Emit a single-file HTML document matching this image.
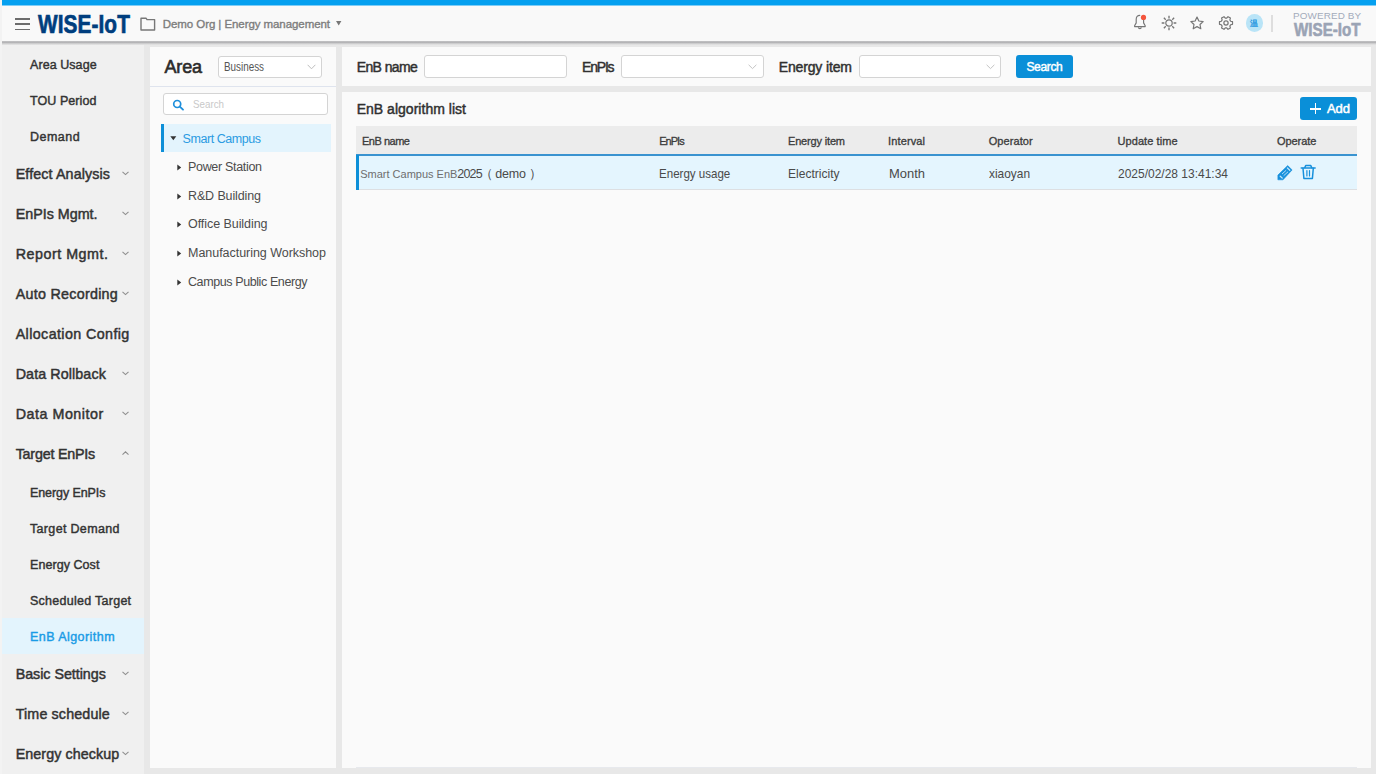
<!DOCTYPE html>
<html lang="en"><head><meta charset="utf-8"><title>WISE-IoT Energy management - EnB Algorithm</title>
<style>
html,body{margin:0;padding:0}
body{width:1376px;height:774px;overflow:hidden;position:relative;background:#e8e8e8;font-family:"Liberation Sans", sans-serif;}
div,span,svg{position:absolute;box-sizing:border-box}
header,nav,aside,main,section{display:block;margin:0;padding:0}
.t{white-space:nowrap;line-height:20px;display:block}

.inp{background:#fff;border:1px solid #d4d4d4;border-radius:3px}

</style></head><body>
<header>
<div style="left:0px;top:0px;width:1376px;height:5px;background:#05a0f0"></div>
<div style="left:0px;top:5px;width:1376px;height:1px;background:#7fcdf6"></div>
<div style="left:0px;top:6px;width:1376px;height:35px;background:#f9f9f9"></div>
<div style="left:0px;top:41px;width:1376px;height:4px;background:linear-gradient(#c4c4c6 0%,#b2b2b4 35%,#cfcfd0 65%,#e8e8e8 100%)"></div>
<div style="left:15px;top:18.2px;width:15px;height:1.5px;background:#6c6c6c"></div>
<div style="left:15px;top:23.4px;width:15px;height:1.5px;background:#6c6c6c"></div>
<div style="left:15px;top:28.6px;width:15px;height:1.5px;background:#6c6c6c"></div>
<span class="t " style="left:37.6px;top:14.30px;font-size:26px;font-weight:700;color:#003e7e;transform-origin:0 50%;transform:scaleX(0.80);letter-spacing:0.1px;-webkit-text-stroke:0.7px #003e7e;">WISE-IoT</span>
<svg style="left:139px;top:15px" width="18" height="17" viewBox="0 0 18 17"><path d="M2 3.2 H7 L8 4.6 H15.6 V15 H2 Z" fill="none" stroke="#777" stroke-width="1.4" stroke-linejoin="round"/></svg>
<span class="t " style="left:162.8px;top:13.73px;font-size:11.5px;font-weight:400;color:#7d7d7d;letter-spacing:-0.074px;-webkit-text-stroke:0.35px #7d7d7d;">Demo Org | Energy management</span>
<svg style="left:336px;top:21px" width="6" height="5" viewBox="0 0 6 5"><path d="M0 0H5.4L2.7 4.4Z" fill="#777"/></svg>
<svg style="left:1130px;top:10px" width="20" height="22" viewBox="0 0 20 22"><path d="M9.8 5.3c-2.3 0-3.6 1.7-3.6 4v3.6l-1.6 2.9v.8h10.6v-.8l-1.6-2.9v-3.2" fill="none" stroke="#767676" stroke-width="1.15" stroke-linejoin="round" stroke-linecap="round"/><path d="M8.3 17.4a1.6 1.6 0 0 0 3.1 0" fill="none" stroke="#767676" stroke-width="1.2"/><circle cx="13.5" cy="7.4" r="2.6" fill="#f4553d"/></svg>
<svg style="left:1158.5px;top:13px" width="20" height="20" viewBox="0 0 20 20"><g stroke="#767676" stroke-width="1.35" fill="none"><circle cx="10" cy="10" r="3.2" stroke-width="1.2"/><path d="M10 2.7v2.7M10 14.6V17.3M2.7 10h2.7M14.6 10H17.3M4.85 4.85l1.9 1.9M13.25 13.25l1.9 1.9M4.85 15.15l1.9-1.9M13.25 6.75l1.9-1.9"/></g></svg>
<svg style="left:1187.05px;top:13px" width="20" height="20" viewBox="0 0 20 20"><path d="M10 4.1l1.85 3.9 4.3.55-3.15 2.95.8 4.25L10 13.65l-3.8 2.1.8-4.25L3.85 8.55 8.15 8z" fill="none" stroke="#767676" stroke-width="1.2" stroke-linejoin="round"/></svg>
<svg style="left:1215.8px;top:12.8px" width="20" height="20" viewBox="0 0 20 20"><g fill="none" stroke="#767676" stroke-width="1.3" stroke-linejoin="round" transform="translate(10 10) rotate(90) scale(0.9 0.93) translate(-10 -10)"><path d="M8.5 3h3l.5 2 1.5.85 2-.6 1.5 2.6-1.5 1.4v1.5l1.5 1.4-1.5 2.6-2-.6-1.5.85-.5 2h-3l-.5-2-1.5-.85-2 .6-1.5-2.6 1.5-1.4v-1.5L3 7.85l1.5-2.6 2 .6L8 5z"/><circle cx="10" cy="10" r="2.3"/></g></svg>
<div style="left:1245.5px;top:13.8px;width:17.8px;height:17.8px;background:#b9e4f7;border-radius:50%"></div>
<span class="t " style="left:1250.4px;top:13.30px;font-size:8.4px;font-weight:700;color:#1f95e0;font-family:"Noto Sans CJK SC",sans-serif;">温</span>
<div style="left:1271.3px;top:15px;width:1.4px;height:17px;background:#dedede"></div>
<span class="t " style="left:1292.9px;top:6.41px;font-size:9.9px;font-weight:400;color:#a3abbb;letter-spacing:0.150px;">POWERED BY</span>
<span class="t " style="left:1294px;top:19.70px;font-size:17.5px;font-weight:700;color:#9ba4b5;transform-origin:0 50%;transform:scaleX(0.8672);-webkit-text-stroke:0.6px #9ba4b5;">WISE-IoT</span>
</header>
<nav>
<div style="left:0px;top:44.5px;width:144px;height:730px;background:#f0f0f0"></div>
<div style="left:0px;top:618px;width:144px;height:36px;background:#e3f4fd"></div>
<span class="t " style="left:30px;top:54.94px;font-size:12.5px;font-weight:400;color:#333;letter-spacing:0.065px;-webkit-text-stroke:0.42px #333;">Area Usage</span>
<span class="t " style="left:30px;top:90.94px;font-size:12.5px;font-weight:400;color:#333;letter-spacing:0.070px;-webkit-text-stroke:0.42px #333;">TOU Period</span>
<span class="t " style="left:30px;top:126.94px;font-size:12.5px;font-weight:400;color:#333;letter-spacing:0.490px;-webkit-text-stroke:0.42px #333;">Demand</span>
<span class="t " style="left:30px;top:482.94px;font-size:12.5px;font-weight:400;color:#333;letter-spacing:-0.094px;-webkit-text-stroke:0.42px #333;">Energy EnPIs</span>
<span class="t " style="left:30px;top:518.94px;font-size:12.5px;font-weight:400;color:#333;letter-spacing:0.328px;-webkit-text-stroke:0.42px #333;">Target Demand</span>
<span class="t " style="left:30px;top:554.94px;font-size:12.5px;font-weight:400;color:#333;letter-spacing:0.062px;-webkit-text-stroke:0.42px #333;">Energy Cost</span>
<span class="t " style="left:30px;top:590.94px;font-size:12.5px;font-weight:400;color:#333;letter-spacing:0.268px;-webkit-text-stroke:0.42px #333;">Scheduled Target</span>
<span class="t " style="left:30px;top:626.94px;font-size:12.5px;font-weight:400;color:#1a9be6;letter-spacing:0.448px;-webkit-text-stroke:0.42px #1a9be6;">EnB Algorithm</span>
<span class="t " style="left:15.7px;top:164.46px;font-size:14.3px;font-weight:400;color:#333;letter-spacing:0.113px;-webkit-text-stroke:0.47px #333;">Effect Analysis</span>
<svg style="left:122px;top:171.3px" width="7" height="4.4" viewBox="0 0 7 4.4"><path d="M0.5 0.8L3.5 3.6L6.5 0.8" fill="none" stroke="#8e8e8e" stroke-width="1.1"/></svg>
<span class="t " style="left:15.7px;top:204.46px;font-size:14.3px;font-weight:400;color:#333;letter-spacing:-0.004px;-webkit-text-stroke:0.47px #333;">EnPIs Mgmt.</span>
<svg style="left:122px;top:211.3px" width="7" height="4.4" viewBox="0 0 7 4.4"><path d="M0.5 0.8L3.5 3.6L6.5 0.8" fill="none" stroke="#8e8e8e" stroke-width="1.1"/></svg>
<span class="t " style="left:15.7px;top:244.46px;font-size:14.3px;font-weight:400;color:#333;letter-spacing:0.517px;-webkit-text-stroke:0.47px #333;">Report Mgmt.</span>
<svg style="left:122px;top:251.3px" width="7" height="4.4" viewBox="0 0 7 4.4"><path d="M0.5 0.8L3.5 3.6L6.5 0.8" fill="none" stroke="#8e8e8e" stroke-width="1.1"/></svg>
<span class="t " style="left:15.7px;top:284.46px;font-size:14.3px;font-weight:400;color:#333;letter-spacing:0.272px;-webkit-text-stroke:0.47px #333;">Auto Recording</span>
<svg style="left:122px;top:291.3px" width="7" height="4.4" viewBox="0 0 7 4.4"><path d="M0.5 0.8L3.5 3.6L6.5 0.8" fill="none" stroke="#8e8e8e" stroke-width="1.1"/></svg>
<span class="t " style="left:15.7px;top:324.46px;font-size:14.3px;font-weight:400;color:#333;letter-spacing:0.394px;-webkit-text-stroke:0.47px #333;">Allocation Config</span>
<span class="t " style="left:15.7px;top:364.46px;font-size:14.3px;font-weight:400;color:#333;letter-spacing:0.092px;-webkit-text-stroke:0.47px #333;">Data Rollback</span>
<svg style="left:122px;top:371.3px" width="7" height="4.4" viewBox="0 0 7 4.4"><path d="M0.5 0.8L3.5 3.6L6.5 0.8" fill="none" stroke="#8e8e8e" stroke-width="1.1"/></svg>
<span class="t " style="left:15.7px;top:404.46px;font-size:14.3px;font-weight:400;color:#333;letter-spacing:0.522px;-webkit-text-stroke:0.47px #333;">Data Monitor</span>
<svg style="left:122px;top:411.3px" width="7" height="4.4" viewBox="0 0 7 4.4"><path d="M0.5 0.8L3.5 3.6L6.5 0.8" fill="none" stroke="#8e8e8e" stroke-width="1.1"/></svg>
<span class="t " style="left:15.7px;top:444.46px;font-size:14.3px;font-weight:400;color:#333;letter-spacing:-0.214px;-webkit-text-stroke:0.47px #333;">Target EnPIs</span>
<svg style="left:122px;top:451.3px" width="7" height="4.4" viewBox="0 0 7 4.4"><path d="M0.5 3.6L3.5 0.8L6.5 3.6" fill="none" stroke="#8e8e8e" stroke-width="1.1"/></svg>
<span class="t " style="left:15.7px;top:664.46px;font-size:14.3px;font-weight:400;color:#333;letter-spacing:-0.038px;-webkit-text-stroke:0.47px #333;">Basic Settings</span>
<svg style="left:122px;top:671.3px" width="7" height="4.4" viewBox="0 0 7 4.4"><path d="M0.5 0.8L3.5 3.6L6.5 0.8" fill="none" stroke="#8e8e8e" stroke-width="1.1"/></svg>
<span class="t " style="left:15.7px;top:704.46px;font-size:14.3px;font-weight:400;color:#333;letter-spacing:0.137px;-webkit-text-stroke:0.47px #333;">Time schedule</span>
<svg style="left:122px;top:711.3px" width="7" height="4.4" viewBox="0 0 7 4.4"><path d="M0.5 0.8L3.5 3.6L6.5 0.8" fill="none" stroke="#8e8e8e" stroke-width="1.1"/></svg>
<span class="t " style="left:15.7px;top:744.46px;font-size:14.3px;font-weight:400;color:#333;letter-spacing:0.075px;-webkit-text-stroke:0.47px #333;">Energy checkup</span>
<svg style="left:122px;top:751.3px" width="7" height="4.4" viewBox="0 0 7 4.4"><path d="M0.5 0.8L3.5 3.6L6.5 0.8" fill="none" stroke="#8e8e8e" stroke-width="1.1"/></svg>
</nav>
<aside>
<div style="left:150px;top:47px;width:186px;height:721px;background:#fafafa"></div>
<span class="t " style="left:164.5px;top:56.71px;font-size:18px;font-weight:400;color:#2b2b2b;letter-spacing:-0.177px;-webkit-text-stroke:0.6px #2b2b2b;">Area</span>
<div class="inp" style="left:218.3px;top:55.5px;width:103.5px;height:22px;"></div>
<span class="t " style="left:224.2px;top:57.44px;font-size:12px;font-weight:400;color:#555;transform-origin:0 50%;transform:scaleX(0.8213);">Business</span>
<svg style="left:307px;top:63.5px" width="9" height="6" viewBox="0 0 9 6"><path d="M0.6 0.8L4.5 4.8L8.4 0.8" fill="none" stroke="#bdbdbd" stroke-width="1"/></svg>
<div style="left:150px;top:86px;width:186px;height:1px;background:#dfe4ee"></div>
<div class="inp" style="left:163.3px;top:92.8px;width:165px;height:22.6px;"></div>
<svg style="left:172px;top:98.5px" width="13" height="12" viewBox="0 0 13 12"><circle cx="5.2" cy="5" r="3.5" fill="none" stroke="#1f8fdb" stroke-width="1.7"/><path d="M7.8 7.6L11 10.6" stroke="#1f8fdb" stroke-width="1.9" stroke-linecap="round"/></svg>
<span class="t " style="left:192.7px;top:93.83px;font-size:11.5px;font-weight:400;color:#c9c9c9;transform-origin:0 50%;transform:scaleX(0.8508);">Search</span>
<div style="left:160.6px;top:123.8px;width:170.6px;height:28.6px;background:#e3f4fd"></div>
<div style="left:160.6px;top:123.8px;width:3px;height:28.6px;background:#0d8fd8"></div>
<svg style="left:170px;top:136.2px" width="7" height="5" viewBox="0 0 7 5"><path d="M0.3 0.3H6.3L3.3 4.2Z" fill="#333"/></svg>
<span class="t " style="left:182.6px;top:129.04px;font-size:12.5px;font-weight:400;color:#2a9be2;letter-spacing:-0.451px;">Smart Campus</span>
<svg style="left:177px;top:163.8px" width="5" height="7" viewBox="0 0 5 7"><path d="M0.3 0.4V6.4L4.2 3.4Z" fill="#333"/></svg>
<span class="t " style="left:188px;top:157.14px;font-size:12.5px;font-weight:400;color:#4c4c4c;letter-spacing:-0.319px;">Power Station</span>
<svg style="left:177px;top:192.5px" width="5" height="7" viewBox="0 0 5 7"><path d="M0.3 0.4V6.4L4.2 3.4Z" fill="#333"/></svg>
<span class="t " style="left:188px;top:185.84px;font-size:12.5px;font-weight:400;color:#4c4c4c;letter-spacing:-0.122px;">R&amp;D Building</span>
<svg style="left:177px;top:221.10000000000002px" width="5" height="7" viewBox="0 0 5 7"><path d="M0.3 0.4V6.4L4.2 3.4Z" fill="#333"/></svg>
<span class="t " style="left:188px;top:214.44px;font-size:12.5px;font-weight:400;color:#4c4c4c;letter-spacing:-0.062px;">Office Building</span>
<svg style="left:177px;top:249.70000000000002px" width="5" height="7" viewBox="0 0 5 7"><path d="M0.3 0.4V6.4L4.2 3.4Z" fill="#333"/></svg>
<span class="t " style="left:188px;top:243.04px;font-size:12.5px;font-weight:400;color:#4c4c4c;letter-spacing:-0.035px;">Manufacturing Workshop</span>
<svg style="left:177px;top:278.5px" width="5" height="7" viewBox="0 0 5 7"><path d="M0.3 0.4V6.4L4.2 3.4Z" fill="#333"/></svg>
<span class="t " style="left:188px;top:271.84px;font-size:12.5px;font-weight:400;color:#4c4c4c;letter-spacing:-0.403px;">Campus Public Energy</span>
</aside>
<main><section>
<div style="left:342px;top:47px;width:1029px;height:39px;background:#fafafa"></div>
<span class="t " style="left:356.7px;top:56.66px;font-size:14px;font-weight:400;color:#303030;letter-spacing:-0.596px;-webkit-text-stroke:0.45px #303030;">EnB name</span>
<div class="inp" style="left:424.3px;top:55.4px;width:142.5px;height:22.2px;"></div>
<span class="t " style="left:582px;top:56.66px;font-size:14px;font-weight:400;color:#303030;letter-spacing:-1.190px;-webkit-text-stroke:0.45px #303030;">EnPIs</span>
<div class="inp" style="left:621px;top:55.4px;width:142.8px;height:22.2px;"></div>
<svg style="left:747.5px;top:64.2px" width="9" height="6" viewBox="0 0 9 6"><path d="M0.6 0.8L4.5 4.6L8.4 0.8" fill="none" stroke="#c4c4c4" stroke-width="1"/></svg>
<span class="t " style="left:778.7px;top:56.66px;font-size:14px;font-weight:400;color:#303030;letter-spacing:-0.140px;-webkit-text-stroke:0.45px #303030;">Energy item</span>
<div class="inp" style="left:858.5px;top:55.4px;width:142.5px;height:22.2px;"></div>
<svg style="left:986px;top:64.2px" width="9" height="6" viewBox="0 0 9 6"><path d="M0.6 0.8L4.5 4.6L8.4 0.8" fill="none" stroke="#c4c4c4" stroke-width="1"/></svg>
<div style="left:1015.7px;top:55.3px;width:57.3px;height:22.6px;background:#0a8fd8;border-radius:3px"></div>
<span class="t " style="left:1026.4px;top:56.64px;font-size:12px;font-weight:400;color:#fff;letter-spacing:-0.326px;-webkit-text-stroke:0.45px #fff;">Search</span>
</section>
<section>
<div style="left:342px;top:92px;width:1029px;height:676px;background:#fafafa"></div>
<span class="t " style="left:356.7px;top:99.16px;font-size:14px;font-weight:400;color:#303030;letter-spacing:0.021px;-webkit-text-stroke:0.45px #303030;">EnB algorithm list</span>
<div style="left:1299.8px;top:97.4px;width:57px;height:22.7px;background:#0a8fd8;border-radius:3px"></div>
<div style="left:1309.8px;top:108px;width:11.2px;height:1.5px;background:#fff"></div>
<div style="left:1314.65px;top:103.1px;width:1.5px;height:11.3px;background:#fff"></div>
<span class="t " style="left:1327px;top:98.95px;font-size:13px;font-weight:400;color:#fff;letter-spacing:-0.070px;-webkit-text-stroke:0.5px #fff;">Add</span>
<div style="left:356.3px;top:126px;width:1000.7px;height:28px;background:#ececec"></div>
<span class="t " style="left:362px;top:130.83px;font-size:11px;font-weight:400;color:#3c3c3c;letter-spacing:-0.482px;-webkit-text-stroke:0.32px #3c3c3c;">EnB name</span>
<span class="t " style="left:659.2px;top:130.83px;font-size:11px;font-weight:400;color:#3c3c3c;letter-spacing:-0.965px;-webkit-text-stroke:0.32px #3c3c3c;">EnPIs</span>
<span class="t " style="left:788px;top:130.83px;font-size:11px;font-weight:400;color:#3c3c3c;letter-spacing:-0.170px;-webkit-text-stroke:0.32px #3c3c3c;">Energy item</span>
<span class="t " style="left:888px;top:130.83px;font-size:11px;font-weight:400;color:#3c3c3c;letter-spacing:0.132px;-webkit-text-stroke:0.32px #3c3c3c;">Interval</span>
<span class="t " style="left:988.7px;top:130.83px;font-size:11px;font-weight:400;color:#3c3c3c;letter-spacing:0.083px;-webkit-text-stroke:0.32px #3c3c3c;">Operator</span>
<span class="t " style="left:1117.5px;top:130.83px;font-size:11px;font-weight:400;color:#3c3c3c;letter-spacing:0.069px;-webkit-text-stroke:0.32px #3c3c3c;">Update time</span>
<span class="t " style="left:1277px;top:130.83px;font-size:11px;font-weight:400;color:#3c3c3c;letter-spacing:-0.075px;-webkit-text-stroke:0.32px #3c3c3c;">Operate</span>
<div style="left:356.3px;top:154px;width:1000.7px;height:36px;background:#e4f5fe;border-top:2px solid #3a93d0;border-bottom:1px solid #dddfe2"></div>
<div style="left:356.3px;top:155px;width:3px;height:34.6px;background:#0d8fd8"></div>
<span class="t " style="left:360.2px;top:163.53px;font-size:11px;font-weight:400;color:#6e6e6e;">Smart Campus EnB</span>
<span class="t " style="left:457.3px;top:163.54px;font-size:12.5px;font-weight:400;color:#4a4a4a;letter-spacing:-0.837px;">2025</span>
<span class="t " style="left:479.6px;top:163.54px;font-size:12.5px;font-weight:400;color:#4a4a4a;font-family:"Noto Sans CJK SC",sans-serif;">（</span>
<span class="t " style="left:495.3px;top:163.54px;font-size:12.5px;font-weight:400;color:#4a4a4a;letter-spacing:-0.227px;">demo</span>
<span class="t " style="left:528.8px;top:163.54px;font-size:12.5px;font-weight:400;color:#4a4a4a;font-family:"Noto Sans CJK SC",sans-serif;">）</span>
<span class="t " style="left:659.2px;top:164.05px;font-size:13px;font-weight:400;color:#4a4a4a;transform-origin:0 50%;transform:scaleX(0.8886);">Energy usage</span>
<span class="t " style="left:788px;top:164.05px;font-size:13px;font-weight:400;color:#4a4a4a;transform-origin:0 50%;transform:scaleX(0.9258);">Electricity</span>
<span class="t " style="left:888.5px;top:164.05px;font-size:13px;font-weight:400;color:#4a4a4a;transform-origin:0 50%;transform:scaleX(0.9961);">Month</span>
<span class="t " style="left:988.7px;top:164.05px;font-size:13px;font-weight:400;color:#4a4a4a;transform-origin:0 50%;transform:scaleX(0.9149);">xiaoyan</span>
<span class="t " style="left:1117.5px;top:164.05px;font-size:13px;font-weight:400;color:#4a4a4a;transform-origin:0 50%;transform:scaleX(0.9222);">2025/02/28 13:41:34</span>
<svg style="left:1276px;top:164px" width="18" height="18" viewBox="0 0 18 18"><path d="M11.7 1.6L16.1 5.9L7 15.8H1.9V11.1Z" fill="#1790dc" stroke="#1790dc" stroke-width="0.6" stroke-linejoin="round"/><g stroke="#c4e6f9" stroke-width="0.9" stroke-linecap="round"><path d="M6.3 9.8l3.6-3.3M7.9 11.5l3.9-3.5"/><path d="M11.4 4l2.4 2.3" stroke-width="1.2"/><path d="M4.2 12.2l2 1.8" stroke-width="1.2"/></g></svg>
<svg style="left:1300px;top:163.2px" width="18" height="18" viewBox="0 0 18 18"><g fill="none" stroke="#1790dc" stroke-width="1.5" stroke-linejoin="round" stroke-linecap="round"><path d="M1.2 4.9h13.9"/><path d="M4.8 4.6l.9-2h5.1l.9 2"/><path d="M3 5.2l.9 10.3h8.5l.9-10.3"/><path d="M6.9 7.6v5.4M9.5 7.6v5.4" stroke-width="1.2"/></g></svg>
<div style="left:356.3px;top:767px;width:1000.7px;height:1px;background:#e7e9ed"></div>
</section></main>
<div style="left:0px;top:0px;width:1.7px;height:774px;background:#f3f3f3"></div>
</body></html>
